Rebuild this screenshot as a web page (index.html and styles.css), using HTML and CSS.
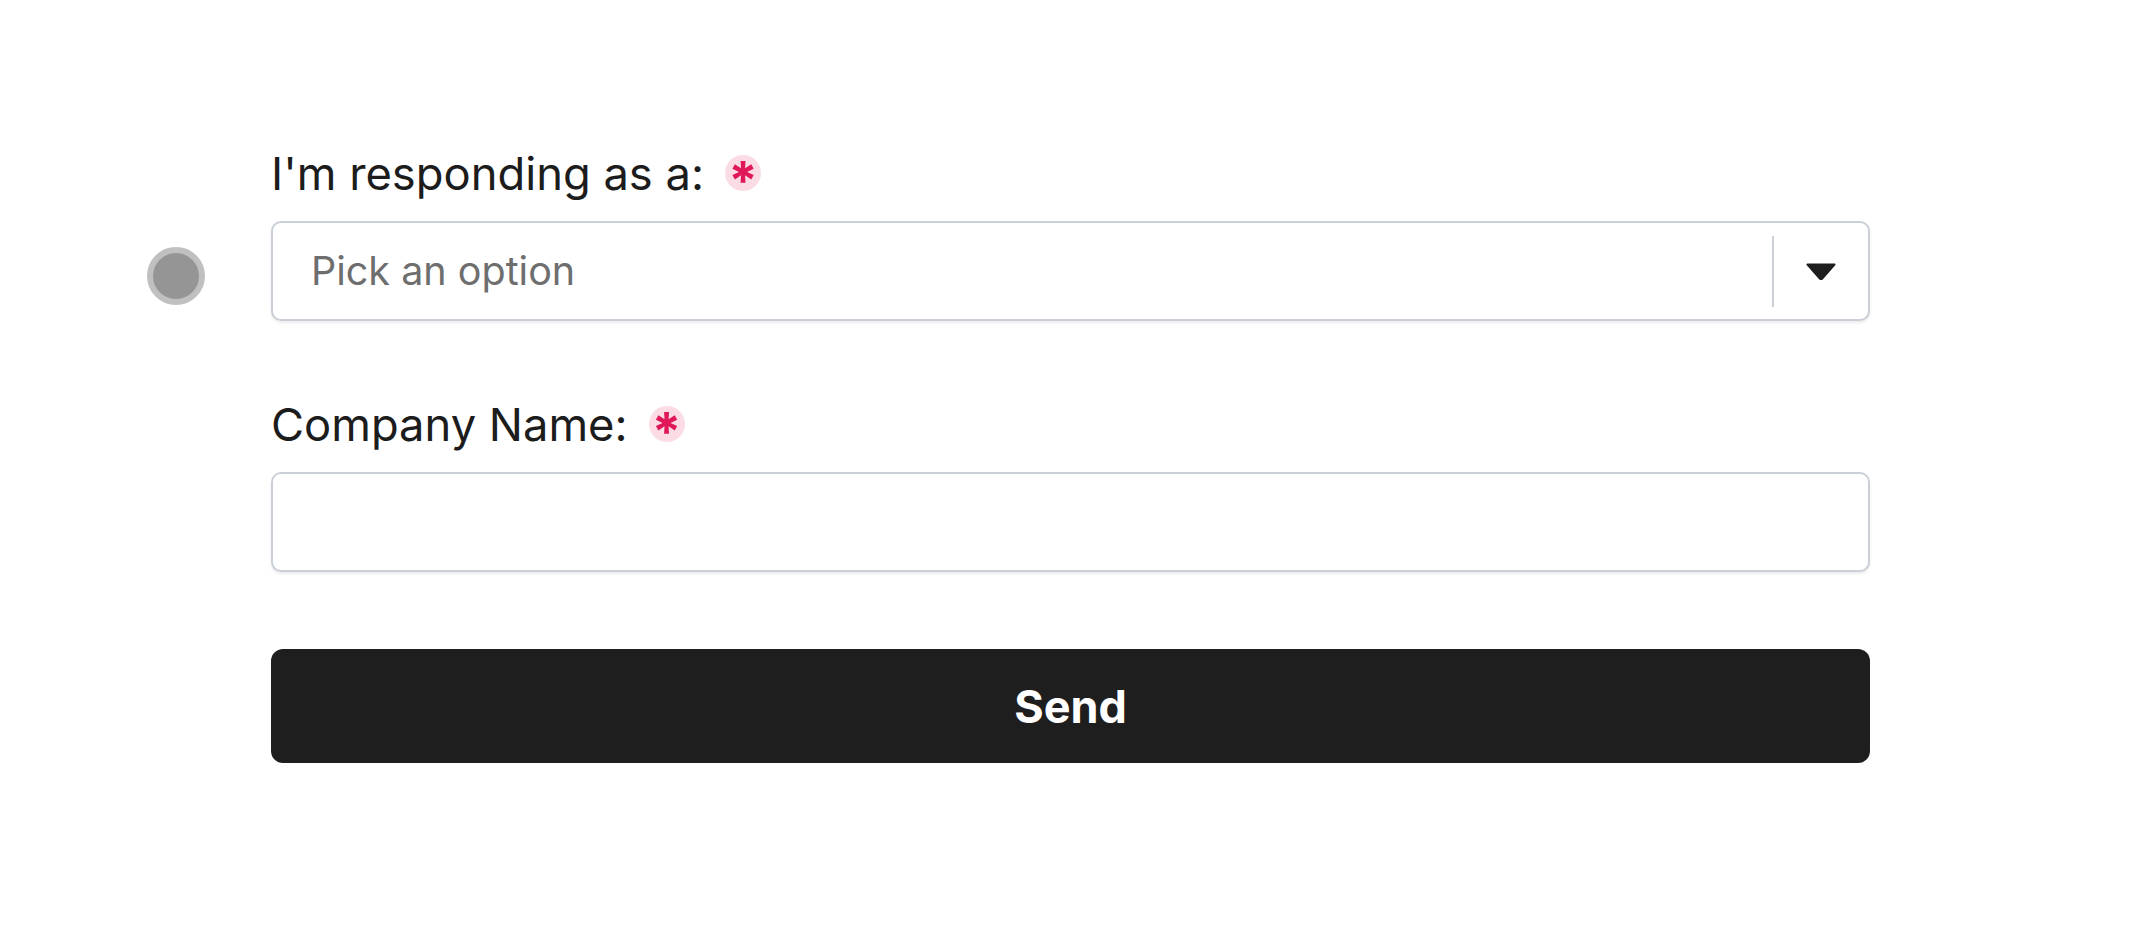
FILE: index.html
```html
<!DOCTYPE html>
<html lang="en">
<head>
<meta charset="utf-8">
<title>Form</title>
<link rel="stylesheet" href="styles.css">
</head>
<body>
<main class="page">
  <form class="form">
    <div class="field">
      <div class="label"><span class="label-text">I'm responding as a:</span><span class="req">*</span></div>
      <div class="control">
        <span class="marker"></span>
        <div class="select">
          <span class="placeholder">Pick an option</span>
          <span class="sep"></span>
          <span class="caret">
            <svg width="30" height="17" viewBox="0 0 30 17"><path d="M1.5 1.5 H28.5 L16.2 15.6 Q15 16.8 13.8 15.6 Z" fill="#1e1e1e" stroke="#1e1e1e" stroke-width="2" stroke-linejoin="round"/></svg>
          </span>
        </div>
      </div>
    </div>
    <div class="field">
      <div class="label"><span class="label-text">Company Name:</span><span class="req">*</span></div>
      <div class="control">
        <div class="input"></div>
      </div>
    </div>
    <button class="send" type="button">Send</button>
  </form>
</main>
</body>
</html>
```
FILE: styles.css
```css
html, body {
  margin: 0;
  padding: 0;
  background: #ffffff;
}
body {
  font-family: Inter, "Noto Sans", "Liberation Sans", sans-serif;
  color: #1c1c1c;
}
.page {
  padding-top: 147px;
  padding-left: 271px;
}
.form {
  width: 1599px;
  display: flex;
  flex-direction: column;
  gap: 77px;
}
.field {
  display: flex;
  flex-direction: column;
  gap: 20px;
}
.label {
  display: flex;
  align-items: center;
  gap: 21px;
  height: 54px;
  font-size: 45.3px;
  line-height: 54px;
  font-weight: 400;
  color: #1c1c1c;
}
.req {
  width: 36px;
  height: 36px;
  border-radius: 50%;
  background: #fbdce5;
  color: #e0185a;
  font-weight: 700;
  font-size: 53px;
  line-height: 18px;
  display: flex;
  justify-content: center;
  align-items: flex-start;
  box-sizing: border-box;
  padding-top: 17.5px;
  margin-top: -3px;
}
.control {
  position: relative;
}
.marker {
  position: absolute;
  left: -124px;
  top: 26px;
  width: 58px;
  height: 58px;
  box-sizing: border-box;
  border-radius: 50%;
  background: #959595;
  border: 6px solid #c0c0c0;
}
.select, .input {
  height: 100px;
  box-sizing: border-box;
  border: 2px solid #cbd0d8;
  border-radius: 10px;
  background: #ffffff;
  box-shadow: 0 2px 3px rgba(0, 0, 0, 0.08);
}
.select {
  display: flex;
  align-items: center;
}
.placeholder {
  flex: 1;
  padding-left: 38px;
  font-size: 39.5px;
  color: #6e6e6e;
}
.sep {
  width: 2px;
  height: 71px;
  background: #cbd0d8;
}
.caret {
  width: 94px;
  display: flex;
  justify-content: center;
  align-items: center;
}
.caret svg {
  display: block;
}
.send {
  height: 114px;
  border: none;
  border-radius: 12px;
  background: #1e1e1e;
  color: #ffffff;
  font-family: Inter, "Noto Sans", "Liberation Sans", sans-serif;
  font-size: 45px;
  font-weight: 700;
  padding: 0;
  cursor: pointer;
}
```
